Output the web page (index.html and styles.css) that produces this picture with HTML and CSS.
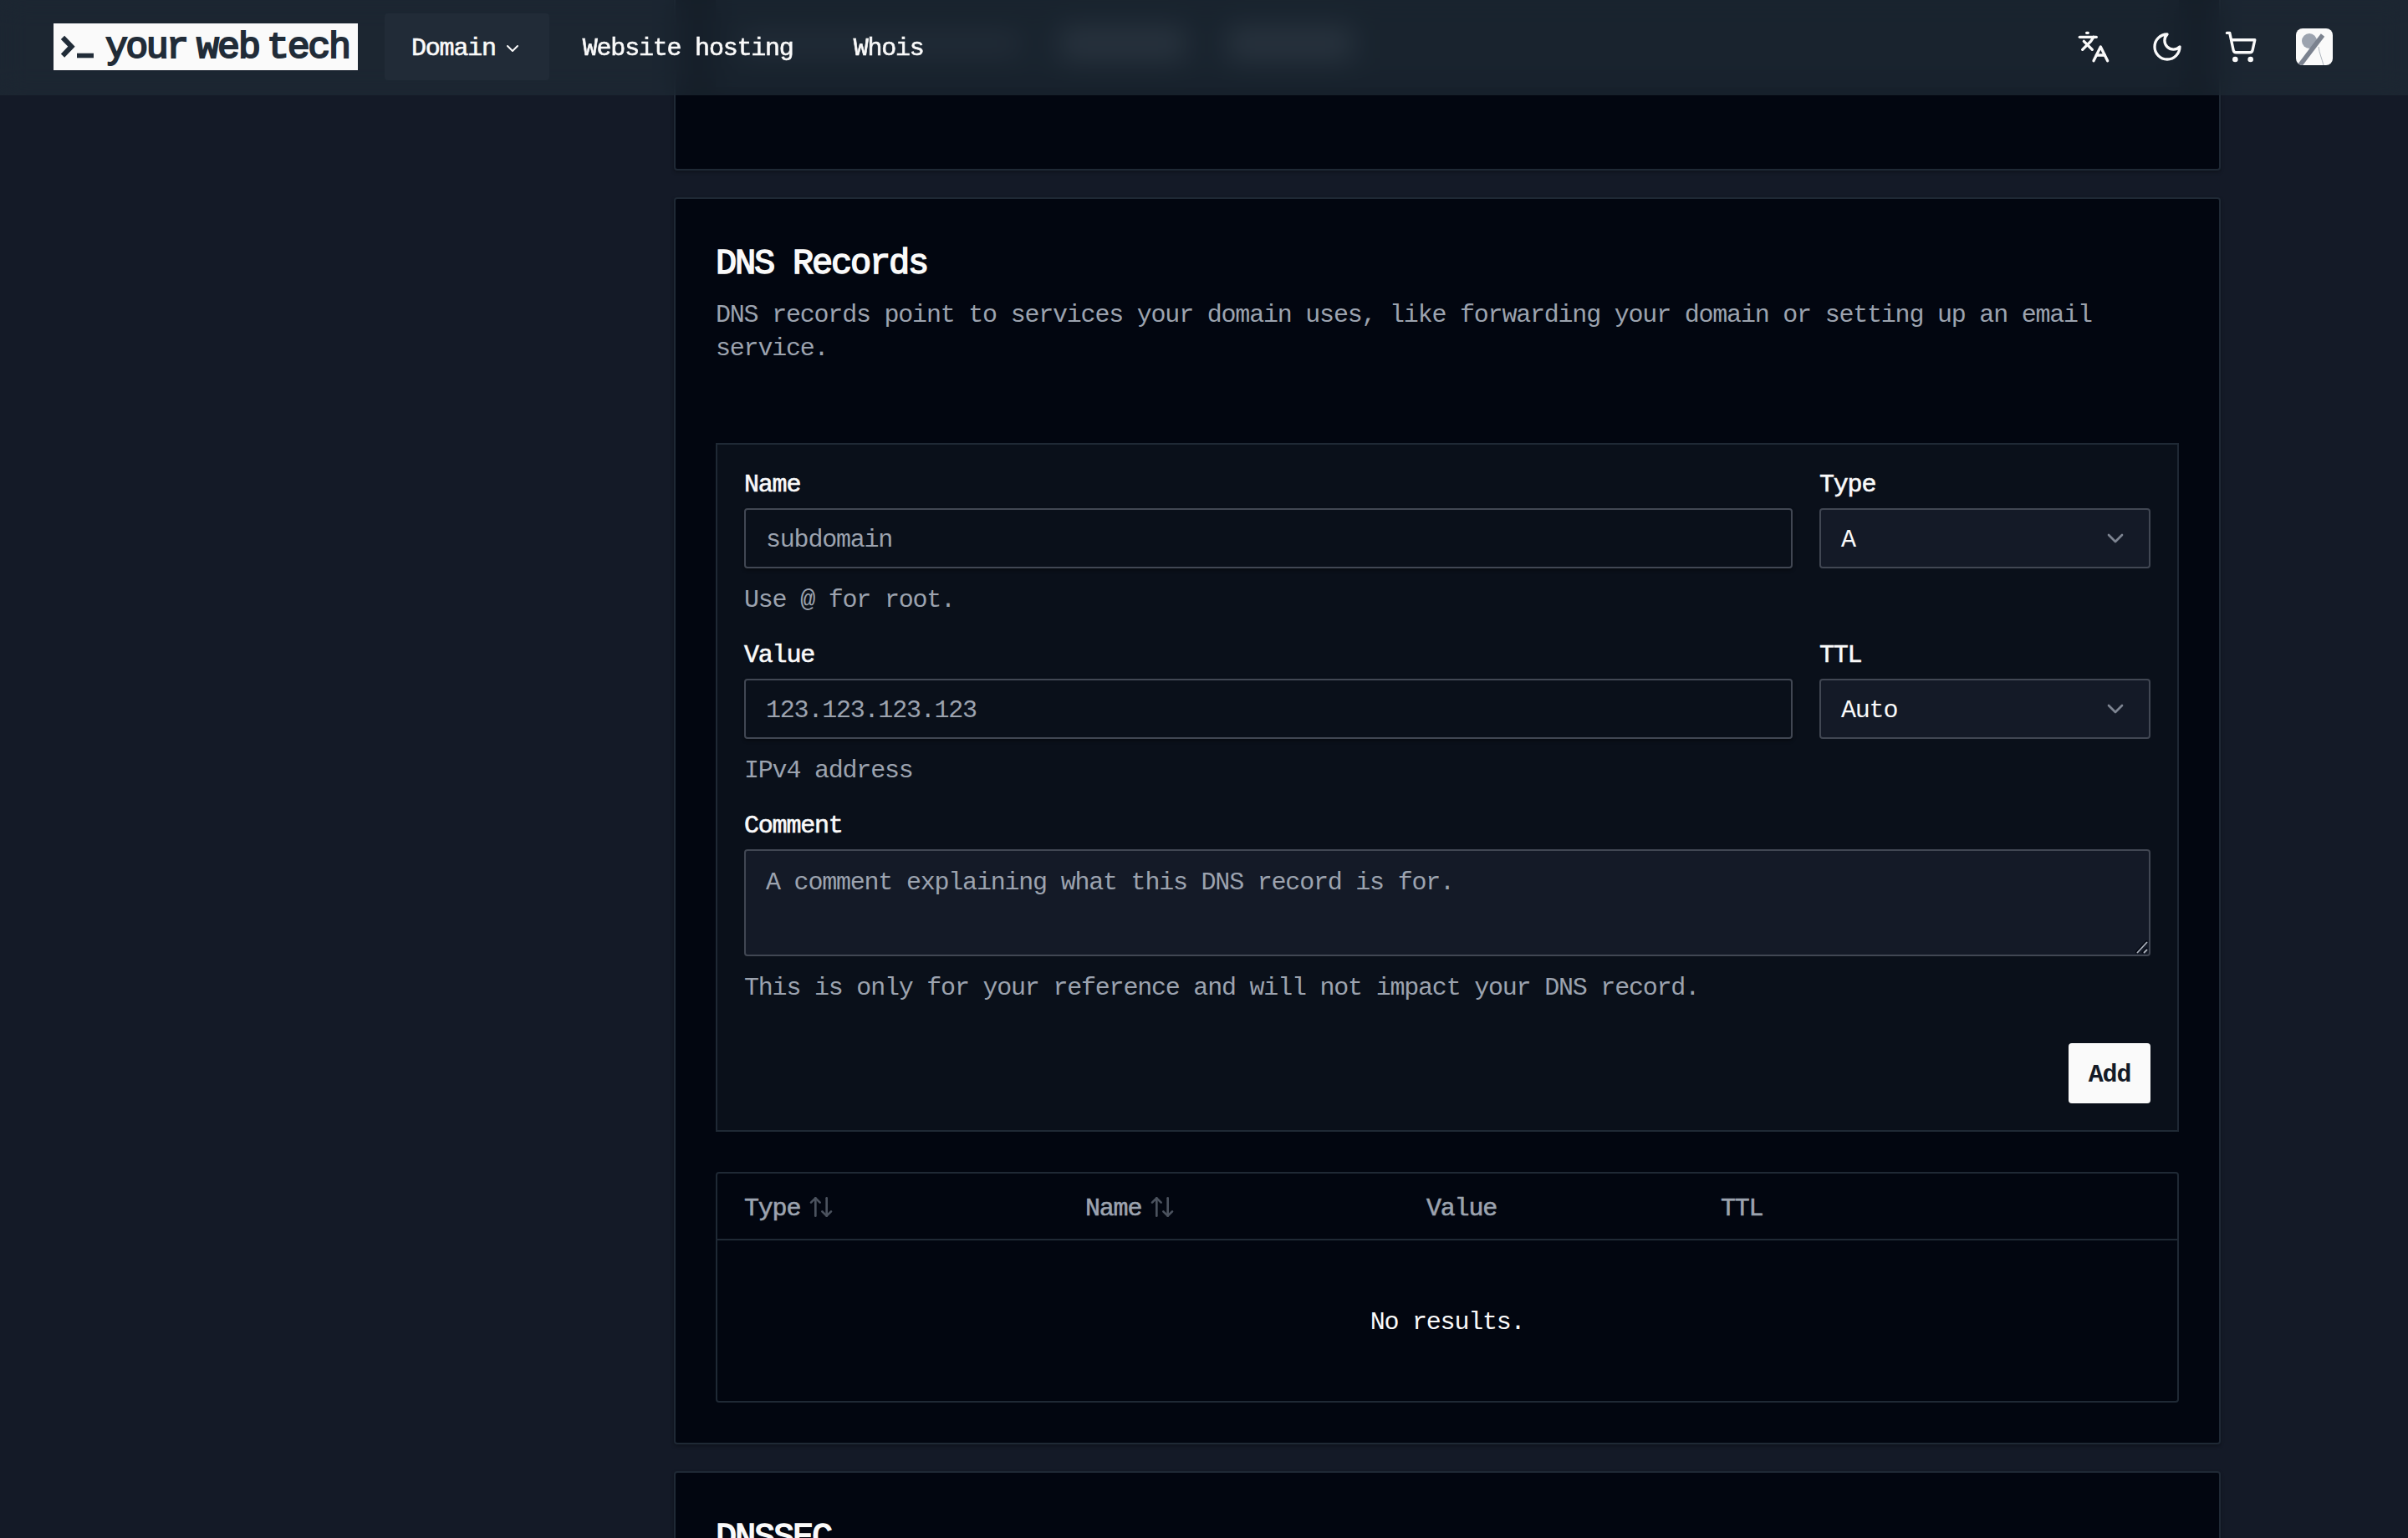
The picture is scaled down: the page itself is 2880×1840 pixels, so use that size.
FILE: index.html
```html
<!DOCTYPE html>
<html lang="en">
<head>
  <meta charset="UTF-8">
  <meta name="viewport" content="width=device-width, initial-scale=1.0">
  <title>DNS Records</title>
  <link rel="stylesheet" href="styles.css">
</head>
<body>
  <header class="header">
    <a class="logo" href="#">
      <svg width="364" height="56" viewBox="0 0 364 56">
        <path class="prompt" d="M11 16.8 21.5 27.7 11 38.6"/>
        <rect class="cursor" x="28" y="35.7" width="20" height="5.6"/>
        <text x="62" y="41.3" textLength="100">your</text>
        <text x="171" y="41.3" textLength="77">web</text>
        <text x="255" y="41.3" textLength="101">tech</text>
      </svg>
    </a>
    <nav class="nav">
      <a class="navLink active" href="#">Domain
        <svg class="icon" width="24" height="24" viewBox="0 0 24 24"><path d="m6 9 6 6 6-6"/></svg>
      </a>
      <a class="navLink" href="#">Website hosting</a>
      <a class="navLink" href="#">Whois</a>
    </nav>
    <div class="actions">
      <svg class="icon" width="40" height="40" viewBox="0 0 24 24"><path d="m5 8 6 6"/><path d="m4 14 6-6 2-3"/><path d="M2 5h12"/><path d="M7 2h1"/><path d="m22 22-5-10-5 10"/><path d="M14 18h6"/></svg>
      <svg class="icon" width="40" height="40" viewBox="0 0 24 24"><path d="M12 3a6 6 0 0 0 9 9 9 9 0 1 1-9-9Z"/></svg>
      <svg class="icon" width="40" height="40" viewBox="0 0 24 24"><circle cx="8" cy="21" r="1"/><circle cx="19" cy="21" r="1"/><path d="M2.05 2.05h2l2.66 12.42a2 2 0 0 0 2 1.58h9.78a2 2 0 0 0 1.95-1.57l1.65-7.43H5.12"/></svg>
      <svg class="avatar" width="44" height="44" viewBox="0 0 44 44">
        <rect width="44" height="44" fill="#fafafa"/>
        <circle cx="16" cy="15" r="9" fill="#9ca3af"/>
        <path d="M4 45 32 8" stroke="#7b828f" stroke-width="5.5"/>
        <path d="M27 22c1 8 4 14 6 22" fill="none" stroke="#9ca3af" stroke-width="0.8"/>
      </svg>
    </div>
  </header>

  <main class="content">
    <section class="card scrolled">
      <div class="scrolledPanel">
        <div class="line"></div>
        <div class="pill"></div>
        <div class="pill"></div>
      </div>
    </section>

    <section class="card">
      <h2 class="title">DNS Records</h2>
      <p class="description">DNS records point to services your domain uses, like forwarding your domain or setting up an email service.</p>

      <form class="recordForm">
        <div class="field">
          <label for="name">Name</label>
          <input id="name" type="text" placeholder="subdomain">
          <p class="hint">Use @ for root.</p>
        </div>
        <div class="field">
          <label>Type</label>
          <button type="button" class="select">A
            <svg class="icon" width="32" height="32" viewBox="0 0 24 24"><path d="m6 9 6 6 6-6"/></svg>
          </button>
        </div>
        <div class="field">
          <label for="value">Value</label>
          <input id="value" type="text" placeholder="123.123.123.123">
          <p class="hint">IPv4 address</p>
        </div>
        <div class="field">
          <label>TTL</label>
          <button type="button" class="select">Auto
            <svg class="icon" width="32" height="32" viewBox="0 0 24 24"><path d="m6 9 6 6 6-6"/></svg>
          </button>
        </div>
        <div class="field wide">
          <label for="comment">Comment</label>
          <div class="textareaBox">
            <textarea id="comment" placeholder="A comment explaining what this DNS record is for."></textarea>
            <svg class="grip" width="16" height="16" viewBox="0 0 16 16"><path class="gripShade" d="M0 15 14 0M8 15 14 9"/><path d="M2 15 14 2M10 15 14 11"/></svg>
          </div>
          <p class="hint">This is only for your reference and will not impact your DNS record.</p>
        </div>
        <div class="formFooter wide">
          <button type="submit" class="add">Add</button>
        </div>
      </form>

      <div class="tableBox">
        <table>
          <thead>
            <tr>
              <th class="colType"><span class="sort">Type
                <svg class="icon" width="32" height="32" viewBox="0 0 24 24"><path d="m21 16-4 4-4-4"/><path d="M17 20V4"/><path d="m3 8 4-4 4 4"/><path d="M7 4v16"/></svg></span>
              </th>
              <th class="colName"><span class="sort">Name
                <svg class="icon" width="32" height="32" viewBox="0 0 24 24"><path d="m21 16-4 4-4-4"/><path d="M17 20V4"/><path d="m3 8 4-4 4 4"/><path d="M7 4v16"/></svg></span>
              </th>
              <th class="colValue">Value</th>
              <th>TTL</th>
            </tr>
          </thead>
          <tbody>
            <tr>
              <td colspan="4">No results.</td>
            </tr>
          </tbody>
        </table>
      </div>
    </section>

    <section class="card">
      <h2 class="title">DNSSEC</h2>
    </section>
  </main>
</body>
</html>
```
FILE: styles.css
```css
*{
  box-sizing: border-box;
}
body{
  margin: 0;
  height: 1840px;
  overflow: hidden;
  background: #141a27;
  color: #fafafa;
  font-family: "Liberation Mono", monospace;
  font-size: 30px;
  letter-spacing: -1.21px;
  line-height: 40px;
}
p, h2{
  margin: 0;
}
a{
  color: inherit;
  text-decoration: none;
}
input, textarea, button{
  font: inherit;
  letter-spacing: inherit;
  color: inherit;
}
.icon{
  flex: none;
  fill: none;
  stroke: currentColor;
  stroke-width: 2;
  stroke-linecap: round;
  stroke-linejoin: round;
}

/* header */
.header{
  position: fixed;
  top: 0;
  left: 0;
  right: 0;
  z-index: 10;
  height: 114px;
  padding: 0 90px 2px 64px;
  display: flex;
  align-items: center;
  background: rgba(33, 44, 56, 0.65);
  backdrop-filter: blur(16px);
}
.logo{
  width: 364px;
  height: 56px;
  background: #fafafa;
}
.logo svg{
  display: block;
}
.logo text{
  font-size: 45px;
  letter-spacing: 0;
  fill: #212c38;
  stroke: #212c38;
  stroke-width: 2;
}
.prompt{
  fill: none;
  stroke: #212c38;
  stroke-width: 6;
}
.cursor{
  fill: #212c38;
}
.nav{
  display: flex;
  gap: 8px;
  margin-left: 32px;
}
.navLink{
  display: flex;
  align-items: center;
  gap: 8px;
  height: 80px;
  padding: 4px 32px 0;
  border-radius: 4px;
  -webkit-text-stroke: 0.6px;
}
.active{
  background: #212b37;
}
.actions{
  display: flex;
  align-items: center;
  gap: 48px;
  margin-left: auto;
}
.avatar{
  margin-left: -2px;
  border-radius: 8px;
}

/* cards */
.content{
  display: flex;
  flex-direction: column;
  gap: 32px;
  width: 1850px;
  margin-left: 806px;
}
.card{
  padding: 48px;
  border: 2px solid #1f2935;
  border-radius: 4px;
  background: #020610;
  box-shadow: 0 2px 4px rgba(0, 0, 0, 0.3);
}
.scrolled{
  height: 244px;
  margin-top: -40px;
  padding-top: 0;
}
.scrolledPanel{
  display: flex;
  align-items: center;
  gap: 50px;
  height: 142px;
  padding: 38px 32px 0;
  background: #0c131e;
}
.line{
  width: 330px;
  height: 22px;
  background: #2c333f;
}
.pill{
  width: 150px;
  height: 42px;
  border-radius: 4px;
  background: #353d49;
}
.title{
  font-size: 42px;
  font-weight: normal;
  letter-spacing: -2.2px;
  line-height: 61px;
  -webkit-text-stroke: 1.5px;
}
.description{
  margin-top: 10px;
  color: #9ca3af;
}

/* record form */
.recordForm{
  display: grid;
  grid-template-columns: 1fr 396px;
  gap: 28px 32px;
  margin-top: 93px;
  padding: 32px;
  border: 2px solid #1f2935;
  background: #0a101a;
}
.wide{
  grid-column: 1 / -1;
}
.field label{
  display: block;
  margin-bottom: 12px;
  line-height: 32px;
  -webkit-text-stroke: 0.6px;
}
input, .select, textarea{
  display: block;
  width: 100%;
  border: 2px solid #414753;
  border-radius: 4px;
  outline: none;
}
input, .select{
  height: 72px;
  padding: 4px 24px 0;
  background: transparent;
}
input{
  box-shadow: 0 2px 4px rgba(0, 0, 0, 0.4);
}
::placeholder{
  color: #9ca3af;
}
.select{
  display: flex;
  align-items: center;
  justify-content: space-between;
  background: #141a27;
}
.select .icon{
  margin-top: -4px;
  color: #7d8491;
}
.textareaBox{
  position: relative;
}
textarea{
  height: 128px;
  padding: 18px 24px;
  background: #141a27;
  resize: none;
}
/* resize handle */
.grip{
  position: absolute;
  right: 2px;
  bottom: 3px;
  fill: none;
  stroke: #aab0ba;
  stroke-width: 1.8;
}
.gripShade{
  stroke: #020610;
}
.hint{
  margin-top: 16px;
  line-height: 44px;
  color: #9ca3af;
}
.formFooter{
  display: flex;
  justify-content: flex-end;
  margin-top: 16px;
}
.add{
  width: 98px;
  height: 72px;
  padding: 4px 0 0;
  border: none;
  border-radius: 4px;
  background: #fafafa;
  color: #141a27;
  font-weight: bold;
}

/* records table */
.tableBox{
  margin-top: 48px;
  border: 2px solid #1f2935;
  border-radius: 4px;
}
table{
  width: 100%;
  table-layout: fixed;
  border-spacing: 0;
}
th{
  height: 80px;
  padding: 5px 32px 0;
  border-bottom: 2px solid #1f2935;
  color: #9ca3af;
  font-weight: normal;
  text-align: left;
  -webkit-text-stroke: 0.6px;
}
.colType, .colName{
  width: 408px;
}
.colValue{
  width: 352px;
}
.sort{
  display: flex;
  align-items: center;
  gap: 9px;
}
.sort .icon{
  margin-top: -3px;
  color: #4b525e;
}
td{
  height: 192px;
  padding: 4px 32px 0;
  text-align: center;
}
```
